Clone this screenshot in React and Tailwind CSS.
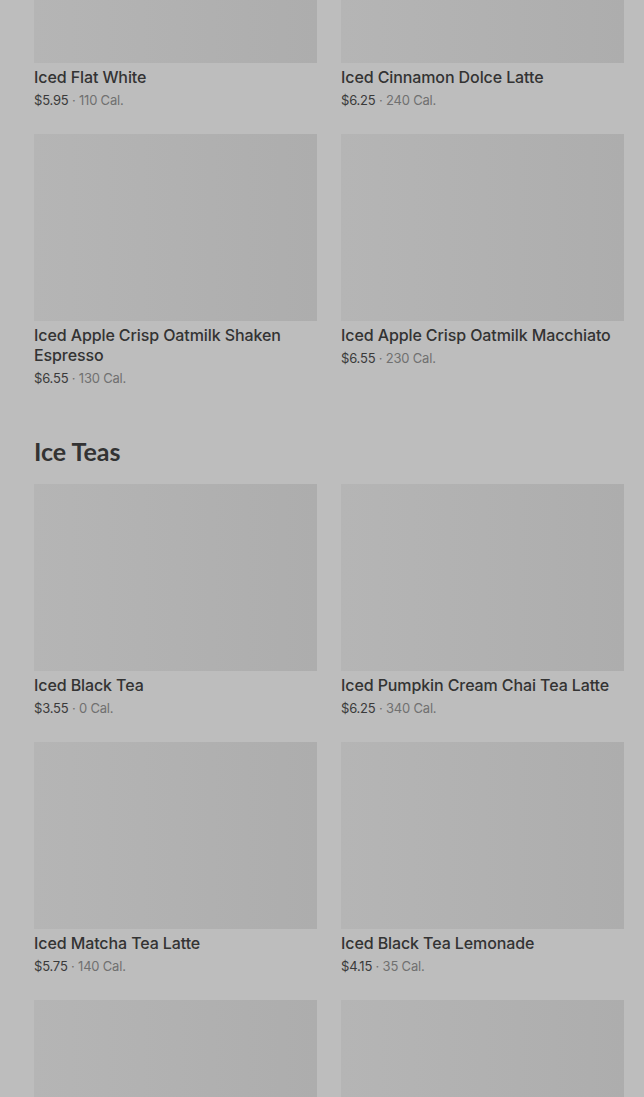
import React from "react";

const upper = [
  { name: "Iced Flat White", price: "$5.95", cal: "110 Cal." },
  { name: "Iced Cinnamon Dolce Latte", price: "$6.25", cal: "240 Cal." },
  { name: "Iced Apple Crisp Oatmilk Shaken Espresso", price: "$6.55", cal: "130 Cal." },
  { name: "Iced Apple Crisp Oatmilk Macchiato", price: "$6.55", cal: "230 Cal." },
];

const teas = [
  { name: "Iced Black Tea", price: "$3.55", cal: "0 Cal." },
  { name: "Iced Pumpkin Cream Chai Tea Latte", price: "$6.25", cal: "340 Cal." },
  { name: "Iced Matcha Tea Latte", price: "$5.75", cal: "140 Cal." },
  { name: "Iced Black Tea Lemonade", price: "$4.15", cal: "35 Cal." },
];

function Thumb() {
  return <div className="h-[187px] w-full bg-gradient-to-r from-[#b5b5b5] to-[#adadad]" />;
}

function Card({ item }) {
  return (
    <div className="flex flex-col">
      <Thumb />
      <h3 className="mt-[4px] text-[16px] leading-[20px] font-medium text-[#333] font-['Inter',sans-serif] tracking-[-0.1px]">
        {item.name}
      </h3>
      <p className="mt-[3px] text-[13px] leading-[20px] font-['Inter',sans-serif] tracking-[-0.2px]">
        <span className="text-[#3a3a3a]">{item.price}</span>
        <span className="text-[#707070]"> · {item.cal}</span>
      </p>
    </div>
  );
}

function App() {
  return (
    <div className="w-full h-[1097px] overflow-hidden bg-[#bdbdbd]">
      <div className="pl-[34px] pr-[20px] mt-[-124px]">
        <div className="grid grid-cols-2 gap-x-[24px] gap-y-[24px]">
          {upper.map((item) => (
            <Card key={item.name} item={item} />
          ))}
        </div>

        <h2 className="mt-[47px] mb-[17px] text-[25px] leading-[32px] font-bold text-[#333] font-['Lato',sans-serif]">
          Ice Teas
        </h2>

        <div className="grid grid-cols-2 gap-x-[24px] gap-y-[24px]">
          {teas.map((item) => (
            <Card key={item.name} item={item} />
          ))}
          <Thumb />
          <Thumb />
        </div>
      </div>
    </div>
  );
}

export default App;
